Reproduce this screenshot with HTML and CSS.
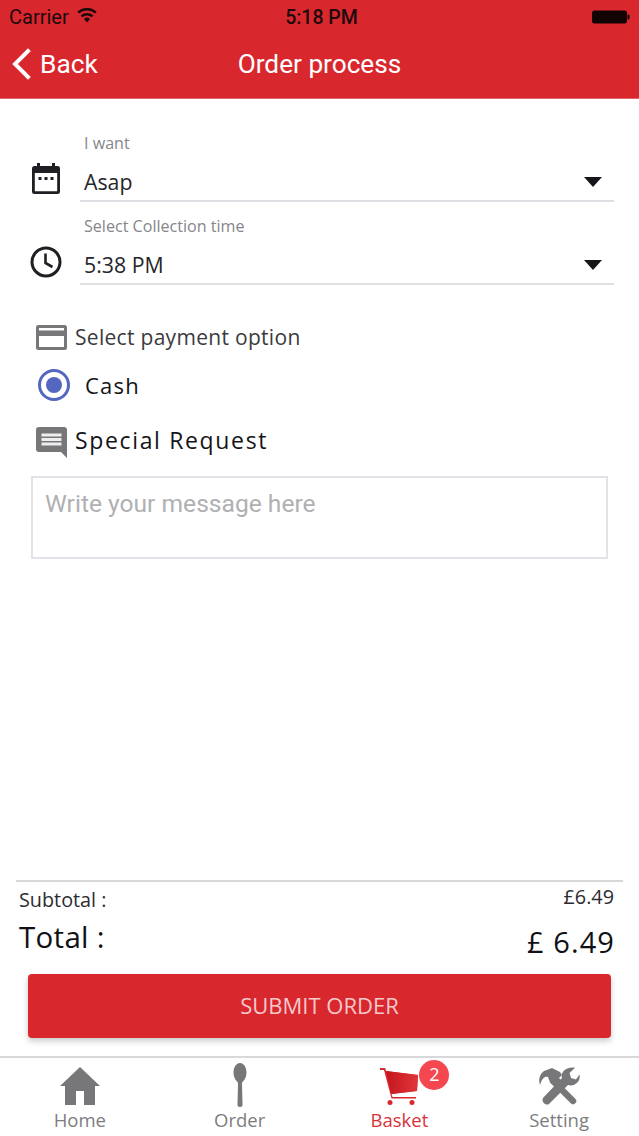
FILE: index.html
```html
<!DOCTYPE html>
<html lang="en">
<head>
<meta charset="utf-8">
<title>Order process</title>
<link rel="stylesheet" href="styles.css">
</head>
<body>
<div class="app">
  <header class="header">
    <div class="status">
      <div class="status-left">
        <span>Carrier</span>
        <svg class="wifi" viewBox="0 0 20 15" width="20" height="15"><path d="M10 14.500 7 11a4.400 4.400 0 0 1 6 0ZM5.300 9.300 3.600 7.400a9.500 9.500 0 0 1 12.800 0L14.700 9.300a7 7 0 0 0-9.400 0ZM2 5.600.3 3.700a14.500 14.500 0 0 1 19.400 0L18 5.600a12 12 0 0 0-16 0Z" fill="#1d0a0c"/></svg>
      </div>
      <div class="status-time">5:18 PM</div>
      <div class="status-right">
        <svg viewBox="0 0 38 14" width="38" height="14"><rect x="0" y="0.500" width="35" height="13" rx="2.500" fill="#120405"/><rect x="35.500" y="4.500" width="2" height="5" rx="1" fill="#120405"/></svg>
      </div>
    </div>
    <nav class="nav">
      <div class="back">
        <svg viewBox="0 0 20 32" width="20" height="32"><path d="M17 3 4 16l13 13" fill="none" stroke="#fff" stroke-width="4" stroke-linecap="square"/></svg>
        <span>Back</span>
      </div>
      <h1 class="title">Order process</h1>
    </nav>
  </header>

  <main class="main">
    <div class="field-row">
      <svg class="field-icon" viewBox="0 0 30 32" width="30" height="32"><path d="M6 1h3v3h12V1h3v3h2.500A2.500 2.500 0 0 1 29 6.500v23a2.500 2.500 0 0 1-2.500 2.500h-23A2.500 2.500 0 0 1 1 29.500v-23A2.500 2.500 0 0 1 3.500 4H6ZM3.800 11v18.200h22.400V11Z" fill="#1f1f24"/><rect x="7.500" y="15" width="3" height="3" fill="#1f1f24"/><rect x="13.500" y="15" width="3" height="3" fill="#1f1f24"/><rect x="19.500" y="15" width="3" height="3" fill="#1f1f24"/></svg>
      <div class="field">
        <label class="field-label">I want</label>
        <div class="field-value"><span>Asap</span><i class="caret"></i></div>
      </div>
    </div>
    <div class="field-row field-row-second">
      <svg class="field-icon" viewBox="0 0 32 32" width="32" height="32"><circle cx="16" cy="16" r="14" fill="none" stroke="#1f1f24" stroke-width="3"/><path d="M15.500 7.500V17l7 4" fill="none" stroke="#1f1f24" stroke-width="2.600"/></svg>
      <div class="field">
        <label class="field-label">Select Collection time</label>
        <div class="field-value"><span>5:38 PM</span><i class="caret"></i></div>
      </div>
    </div>

    <div class="section-row payment">
      <svg viewBox="0 0 31 25" width="31" height="25"><path d="M2.500 0h26A2.500 2.500 0 0 1 31 2.500v20a2.500 2.500 0 0 1-2.500 2.500h-26A2.500 2.500 0 0 1 0 22.500v-20A2.500 2.500 0 0 1 2.500 0ZM3 3v2.500h25V3ZM3 11v11h25V11Z" fill="#77777a" fill-rule="evenodd"/></svg>
      <span>Select payment option</span>
    </div>
    <div class="radio-row">
      <span class="radio"><span class="radio-dot"></span></span>
      <span class="radio-label">Cash</span>
    </div>
    <div class="section-row special">
      <svg viewBox="0 0 31 31" width="31" height="31"><path d="M3 0h25a3 3 0 0 1 3 3v28l-6-6H3a3 3 0 0 1-3-3V3a3 3 0 0 1 3-3Z" fill="#77777a"/><path d="M5.500 6.500h20v3h-20Zm0 4.500h20v3h-20Zm0 4.500h20v3h-20Z" fill="#eeeeee"/></svg>
      <span>Special Request</span>
    </div>
    <div class="message">Write your message here</div>
  </main>

  <section class="totals">
    <div class="sub-row"><span>Subtotal :</span><span class="sub-amount">£6.49</span></div>
    <div class="total-row"><span>Total :</span><span class="total-amount">£ 6.49</span></div>
    <button class="submit" type="button">SUBMIT ORDER</button>
  </section>

  <footer class="tabs">
    <div class="tab">
      <svg viewBox="0 0 40 38" width="40" height="38"><path d="M20 0 40 19h-5v19H24V24h-8v14H5V19H0Z" fill="#77777a"/></svg>
      <span>Home</span>
    </div>
    <div class="tab">
      <svg class="spoon" viewBox="0 0 14 44" width="14" height="44"><path d="M7 0c3.800 0 6.500 4.300 6.500 9.500 0 4.600-2 7.500-3.800 9.200-.6.600-.7 1.300-.7 2.300l.5 20.500A2.500 2.500 0 0 1 7 44a2.500 2.500 0 0 1-2.500-2.500L5 21c0-1-.1-1.700-.7-2.300C2.500 17 .5 14.100.5 9.500.5 4.300 3.200 0 7 0Z" fill="#77777a"/></svg>
      <span>Order</span>
    </div>
    <div class="tab tab-active">
      <span class="cart-wrap">
        <svg viewBox="0 0 38 38" width="38" height="38"><defs><linearGradient id="cartFill" x1="0" y1="0" x2="1" y2="0"><stop offset="0" stop-color="#c4161d"/><stop offset="1" stop-color="#e2343b"/></linearGradient></defs><path d="M0 1h4.500a1 1 0 0 1 1 .8L6 4l32 4-1 16-25.500 3 1 3H36v1.600H11.500L4 3H0Z" fill="#d9272e"/><path d="M6 4l32 4-1 16-25.500 3Z" fill="url(#cartFill)"/><circle cx="10" cy="35.500" r="2.500" fill="#d9272e"/><circle cx="32" cy="35.500" r="2.500" fill="#d9272e"/></svg>
        <span class="badge">2</span>
      </span>
      <span>Basket</span>
    </div>
    <div class="tab">
      <svg viewBox="0 0 42 38" width="42" height="38"><path d="M6 4 14 1l8 4 2 3-3 3 2 2-4 4-2-2-2 2-4-4-1-3C7 9 4 11 2 18 0 12 2 7 6 4Z" fill="#77777a"/><path d="M15 14 35 34" stroke="#77777a" stroke-width="6.500" stroke-linecap="round"/><path d="M37 .8 31.500 6 33 11l5 1.500 3.500-5C43 14 37 20 30 18L11 37c-3 2-8-2-6-6L24 11C22 5 29-1 37 .8Z" fill="#77777a"/></svg>
      <span>Setting</span>
    </div>
  </footer>
</div>
</body>
</html>
```

FILE: styles.css
```css
* { box-sizing: border-box; }
html, body { margin: 0; padding: 0; background: #fff; }
body { font-family: "Open Sans", "Liberation Sans", sans-serif; }
.app { width: 639px; height: 1136px; display: flex; flex-direction: column; overflow: hidden; }

.header { height: 99px; background: #d9272e; border-bottom: 1px solid #e2656a; flex: none; }
.status { height: 33px; display: grid; grid-template-columns: 1fr auto 1fr; align-items: center; padding: 0 9px; font-family: Roboto, sans-serif; color: #1d0a0c; font-size: 20px; }
.status-left { display: flex; align-items: center; gap: 8px; }
.wifi { margin-top: -3px; }
.status-time { font-weight: 500; font-size: 19.500px; padding: 1px 0 0 4px; }
.status-right { display: flex; justify-content: flex-end; }
.nav { position: relative; height: 65px; display: flex; align-items: center; justify-content: center; color: #fff; font-family: Roboto, sans-serif; font-size: 26.300px; }
.back { position: absolute; left: 11px; top: 15px; display: flex; align-items: center; gap: 9px; }
.title { margin: 0; font-size: 26.200px; font-weight: 400; padding-bottom: 3px; }

.main { flex: 1; padding: 34px 25px 0 31px; }
.field-row { display: flex; align-items: flex-end; gap: 19px; }
.field-row-second { margin-top: 14px; gap: 18px; }
.field-icon { flex: none; margin-bottom: 8px; }
.field-row-second .field-icon { margin-bottom: 7px; margin-left: -1px; }
.field { flex: 1; border-bottom: 2px solid #dedee3; height: 69px; padding: 0 0 0 4px; }
.field-label { display: block; font-size: 16.100px; line-height: 20px; color: #86868b; }
.field-value { display: flex; justify-content: space-between; align-items: center; font-size: 21.300px; color: #26262b; line-height: 30px; margin-top: 14px; padding-right: 12px; }
.caret { width: 0; height: 0; border-left: 9px solid transparent; border-right: 9px solid transparent; border-top: 10px solid #16161a; }

.section-row { display: flex; align-items: center; font-size: 21px; color: #3a3a3e; }
.payment { margin: 39px 0 0 5px; gap: 8px; letter-spacing: .3px; height: 26px; }
.payment svg { flex: none; }
.radio-row { display: flex; align-items: center; margin: 19px 0 0 7px; height: 32px; }
.radio { width: 32px; height: 32px; border-radius: 50%; border: 3px solid #5467c0; display: flex; align-items: center; justify-content: center; }
.radio-dot { width: 16px; height: 16px; border-radius: 50%; background: #5467c0; }
.radio-label { margin: 0 0 0 15px; font-size: 22px; letter-spacing: 1.200px; color: #141418; }
.special { margin: 22px 0 0 5px; gap: 8px; height: 34px; color: #141418; font-size: 23px; letter-spacing: 1.650px; }
.special svg { flex: none; margin-top: 4px; }
.message { width: 577px; height: 83px; margin-top: 19px; border: 2px solid #e2e2e8; padding: 9px 12px; font-family: Roboto, sans-serif; font-size: 24.600px; line-height: 34px; color: #b0b0b3; }

.totals { flex: none; margin: 0 16px; border-top: 2px solid #d8d8da; }
.sub-row { display: flex; justify-content: space-between; padding: 1px 9px 0 3px; font-size: 19.800px; line-height: 27px; color: #2c2c30; height: 33px; }
.sub-row > span:first-child { margin-top: 3px; }
.total-row { display: flex; justify-content: space-between; padding: 0 8px 0 3px; font-size: 29.500px; letter-spacing: .3px; color: #111115; margin-top: 3px; line-height: 38px; height: 43px; }
.total-amount { margin-top: 5px; font-size: 29px; letter-spacing: 1.100px; }
.submit { display: block; width: 583px; height: 64px; margin: 13px 0 18px 12px; background: #d9272e; color: #f6c9cb; border: none; border-radius: 4px; font-family: "Open Sans", sans-serif; font-size: 22px; padding: 0 0 3px; box-shadow: 0 3px 6px rgba(0,0,0,.22); }

.tabs { flex: none; height: 80px; border-top: 2px solid #d8d8da; display: grid; grid-template-columns: repeat(4, 1fr); }
.tab { display: flex; flex-direction: column; align-items: center; justify-content: flex-end; font-size: 18.500px; line-height: 26px; color: #7d7d80; padding-bottom: 3px; gap: 2px; }
.spoon { margin-bottom: -2px; }
.tab-active { color: #d9323a; }
.cart-wrap { position: relative; display: block; height: 38px; }
.cart-wrap svg { display: block; }
.badge { position: absolute; left: 39px; top: -7px; width: 30px; height: 30px; border-radius: 50%; background: #f44750; color: #fff; font-size: 18px; line-height: 28px; text-align: center; }
```
